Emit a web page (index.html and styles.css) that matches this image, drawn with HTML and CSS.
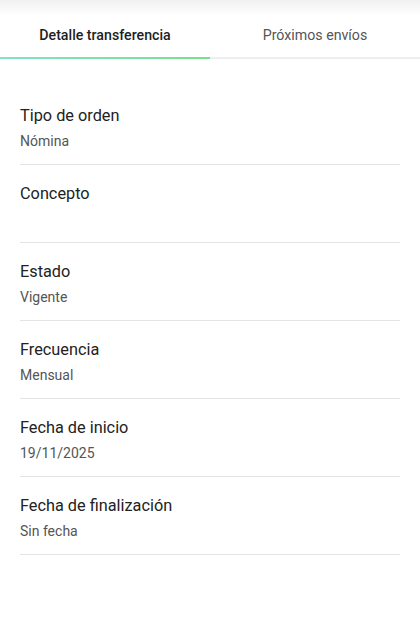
FILE: index.html
```html
<!DOCTYPE html>
<html lang="es">
<head>
    <meta charset="UTF-8">
    <meta name="viewport" content="width=device-width, initial-scale=1.0">
    <title>Detalle transferencia</title>
    <link rel="stylesheet" href="styles.css">
</head>
<body>
    <div class="tabs">
        <div class="tab active">Detalle transferencia</div>
        <div class="tab">Próximos envíos</div>
    </div>
    <ul class="details">
        <li class="row">
            <span class="label">Tipo de orden</span>
            <span class="value">Nómina</span>
        </li>
        <li class="row">
            <span class="label">Concepto</span>
            <span class="value"></span>
        </li>
        <li class="row">
            <span class="label">Estado</span>
            <span class="value">Vigente</span>
        </li>
        <li class="row">
            <span class="label">Frecuencia</span>
            <span class="value">Mensual</span>
        </li>
        <li class="row">
            <span class="label">Fecha de inicio</span>
            <span class="value">19/11/2025</span>
        </li>
        <li class="row">
            <span class="label">Fecha de finalización</span>
            <span class="value">Sin fecha</span>
        </li>
    </ul>
</body>
</html>
```

FILE: styles.css
```css
body {
    margin: 0;
    font-family: Roboto, "Noto Sans", sans-serif;
    background: #fff;
    color: #222;
}
.tabs {
    display: flex;
    height: 57px;
    border-bottom: 2px solid #eeeeee;
    background: linear-gradient(#f1f1f1, #fff 16px);
}
.tab {
    flex: 1;
    display: flex;
    align-items: center;
    justify-content: center;
    padding-top: 12px;
    font-size: 14.2px;
    color: #555;
    position: relative;
}
.tab.active {
    color: #1e1e1e;
    font-weight: 500;
}
.tab.active::after {
    content: "";
    position: absolute;
    left: 0;
    right: 0;
    bottom: -2px;
    height: 2px;
    background: linear-gradient(90deg, #82e2c4, #76e08e);
}
.details {
    list-style: none;
    margin: 28px 20px 0;
    padding: 0;
}
.row {
    display: flex;
    flex-direction: column;
    padding: 18px 0 13px;
    border-bottom: 1px solid #e4e4e4;
}
.label {
    font-size: 16.3px;
    line-height: 22px;
    color: #222;
}
.value {
    margin-top: 4px;
    font-size: 14px;
    line-height: 20px;
    min-height: 20px;
    color: #555;
}
```
